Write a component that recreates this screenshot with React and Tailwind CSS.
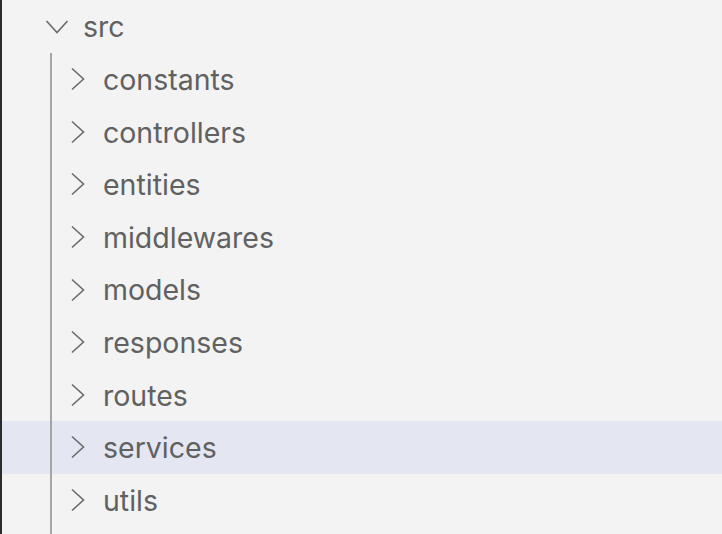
import React from 'react';

const folders = [
  'constants',
  'controllers',
  'entities',
  'middlewares',
  'models',
  'responses',
  'routes',
  'services',
  'utils',
];

const ChevronRight = () => (
  <svg width="16" height="24" viewBox="0 0 16 24" fill="none" className="shrink-0">
    <path d="M2 1.5 L13.5 12 L2 22.5" stroke="#6b6b6b" strokeWidth="1.6" />
  </svg>
);

const ChevronDown = () => (
  <svg width="24" height="16" viewBox="0 0 24 16" fill="none" className="shrink-0">
    <path d="M1.5 2 L12 13.5 L22.5 2" stroke="#6b6b6b" strokeWidth="1.6" />
  </svg>
);

export default function App() {
  return (
    <div
      className="relative w-[722px] h-[534px] overflow-hidden bg-[#f3f3f3] border-l-2 border-[#2b2b2b] text-[#616161] text-[28.5px]"
      style={{ fontFamily: 'Inter, "Liberation Sans", sans-serif' }}
    >
      <div className="h-[53px] flex items-center pl-[43px] pt-[1px]">
        <ChevronDown />
        <span className="ml-[14px] leading-none pt-[1px]">src</span>
      </div>
      <div>
        {folders.map((name) => (
          <div
            key={name}
            className={`h-[52.6px] pl-[68px] flex items-center ${
              name === 'services' ? 'bg-[#e4e6f1]' : ''
            }`}
          >
            <ChevronRight />
            <span className="ml-[17px] leading-none pt-[2px]">{name}</span>
          </div>
        ))}
      </div>
      {/* indent guide */}
      <div className="absolute left-[48px] top-[53px] bottom-0 w-[2px] bg-[#a6a6a6]" />
    </div>
  );
}
